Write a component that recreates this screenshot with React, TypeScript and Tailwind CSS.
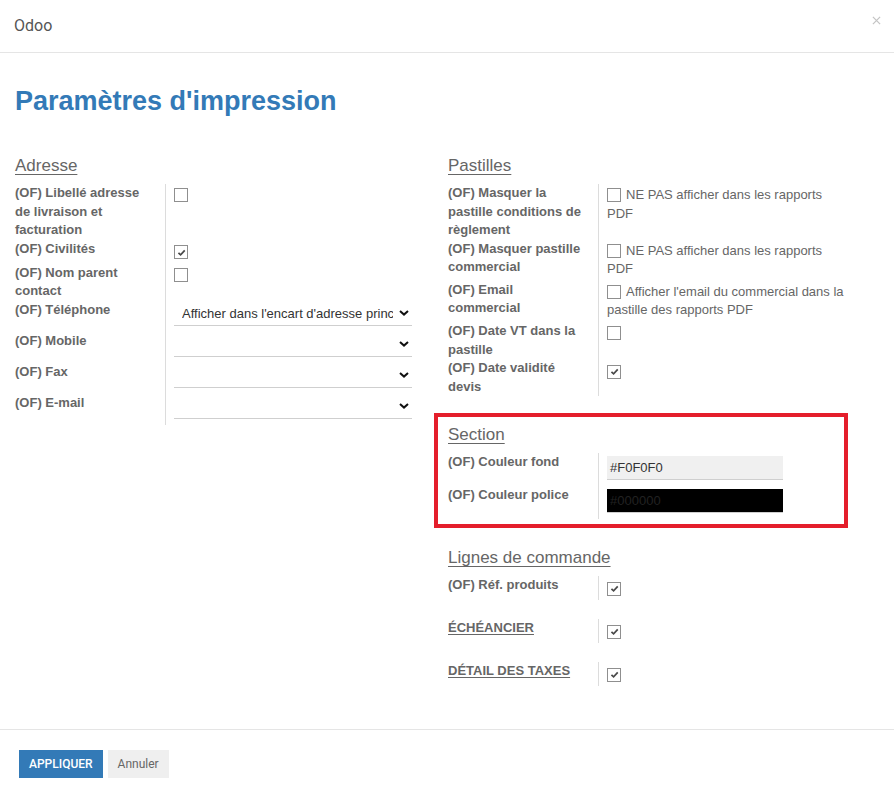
import React from 'react';

function Check({ on, inline }: { on?: boolean; inline?: boolean }) {
  return (
    <span
      className={
        'inline-flex h-[14px] w-[14px] items-center justify-center border border-[#8f8f8f] bg-white ' +
        (inline ? 'mr-[5px] align-[-3px]' : '')
      }
    >
      {on && (
        <svg viewBox="0 0 10 10" className="h-[9px] w-[9px]">
          <path d="M1.6 5.3 L4 7.6 L8.6 2.6" stroke="#4a4a4a" strokeWidth="1.9" fill="none" />
        </svg>
      )}
    </span>
  );
}

function Chevron() {
  return (
    <svg viewBox="0 0 10 6" className="h-[6px] w-[10px] shrink-0">
      <path d="M1 1 L5 4.6 L9 1" stroke="#111" strokeWidth="2" fill="none" />
    </svg>
  );
}

function Heading({ children }: { children: React.ReactNode }) {
  return <div className="mb-[6px] text-[17px] leading-[24px] text-[#666] underline underline-offset-[3px] decoration-1">{children}</div>;
}

// one label / field line of a form group
function Row({ label, children, className = '', link }: { label: string; children?: React.ReactNode; className?: string; link?: boolean }) {
  return (
    <div className={'grid grid-cols-[151px_minmax(0,1fr)] ' + className}>
      <div className={'border-r border-[#dcdcdc] pr-[11px] text-[13px] font-bold leading-[18.57px] text-[#666] ' + (link ? 'underline underline-offset-2' : '')}>
        {label}
      </div>
      <div className="min-w-0 pl-[8px]">{children}</div>
    </div>
  );
}

function Select({ value }: { value?: string }) {
  return (
    <div className="pt-[1px] pb-[6px] pr-[3px]">
      <div className="flex h-[24px] items-center border-b border-[#cfcfcf] pl-[8px] pr-[3px]">
        <div className="min-w-0 flex-1 overflow-hidden whitespace-nowrap text-[13px] text-[#333]">{value}</div>
        <span className="ml-[6px]"><Chevron /></span>
      </div>
    </div>
  );
}

function Box({ on }: { on?: boolean }) {
  return (
    <div className="pt-[4px] pb-[4px] leading-none">
      <Check on={on} />
    </div>
  );
}

function Note({ text }: { text: string }) {
  return (
    <div className="pt-[2px] pb-[2px] text-[13px] leading-[18.57px] text-[#666]">
      <Check inline />
      {text}
    </div>
  );
}

function Colour({ value, dark }: { value: string; dark?: boolean }) {
  return (
    <div className="pt-[3px] pb-[6px]">
      <div
        className={
          'flex h-[24px] w-[176px] items-center border-b border-[#cfcfcf] pl-[3px] text-[13px] ' +
          (dark ? 'bg-black text-[#222]' : 'bg-[#f0f0f0] text-[#333]')
        }
      >
        {value}
      </div>
    </div>
  );
}

export default function App() {
  return (
    <div className="min-h-[794px] w-full bg-white font-['Liberation_Sans',Arial,sans-serif]">
      {/* header */}
      <div className="flex h-[53px] items-center justify-between border-b border-[#e5e5e5] pl-[14px] pr-[13px] pb-[1px] font-['Roboto',sans-serif]">
        <span className="text-[16px] text-[#555]">Odoo</span>
        <svg viewBox="0 0 10 10" className="mb-[10px] h-[9px] w-[9px]">
          <path d="M1 1 L9 9 M9 1 L1 9" stroke="#c4c4c4" strokeWidth="1.4" />
        </svg>
      </div>

      <div className="px-[15px] pb-[43px]">
        <h1 className="pt-[32px] text-[27px] font-bold leading-[32px] text-[#337ab7]">Paramètres d'impression</h1>

        <div className="mt-[37px] grid grid-cols-[400px_414px] gap-x-[19px]">
          {/* left group */}
          <div>
            <Heading>Adresse</Heading>
            <Row label="(OF) Libellé adresse de livraison et facturation"><Box /></Row>
            <Row label="(OF) Civilités"><Box on /></Row>
            <Row label="(OF) Nom parent contact"><Box /></Row>
            <Row label="(OF) Téléphone"><Select value="Afficher dans l'encart d'adresse principale" /></Row>
            <Row label="(OF) Mobile"><Select /></Row>
            <Row label="(OF) Fax"><Select /></Row>
            <Row label="(OF) E-mail"><Select /></Row>
          </div>

          {/* right group */}
          <div>
            <div className="pl-[14px]">
              <Heading>Pastilles</Heading>
              <Row label="(OF) Masquer la pastille conditions de règlement"><Note text="NE PAS afficher dans les rapports PDF" /></Row>
              <Row label="(OF) Masquer pastille commercial"><Note text="NE PAS afficher dans les rapports PDF" /></Row>
              <Row label="(OF) Email commercial"><Note text="Afficher l'email du commercial dans la pastille des rapports PDF" /></Row>
              <Row label="(OF) Date VT dans la pastille"><Box /></Row>
              <Row label="(OF) Date validité devis"><Box on /></Row>
            </div>

            <div className="mt-[17px] border-4 border-[#e41e2b] pl-[10px] pt-[6px] pb-[5px]">
              <Heading>Section</Heading>
              <Row label="(OF) Couleur fond"><Colour value="#F0F0F0" /></Row>
              <Row label="(OF) Couleur police"><Colour value="#000000" dark /></Row>
            </div>

            <div className="mt-[18px] pl-[14px]">
              <Heading>Lignes de commande</Heading>
              <Row label="(OF) Réf. produits"><Box on /></Row>
              <Row label="ÉCHÉANCIER" link className="mt-[19px]"><Box on /></Row>
              <Row label="DÉTAIL DES TAXES" link className="mt-[19px]"><Box on /></Row>
            </div>
          </div>
        </div>
      </div>

      {/* footer */}
      <div className="flex gap-[5px] border-t border-[#e5e5e5] pl-[19px] pt-[20px] font-['Roboto',sans-serif]">
        <button className="h-[28px] bg-[#337ab7] px-[10px] text-[12px] font-medium text-white">APPLIQUER</button>
        <button className="h-[28px] w-[61px] bg-[#efefef] text-[12px] text-[#666]">Annuler</button>
      </div>
    </div>
  );
}
